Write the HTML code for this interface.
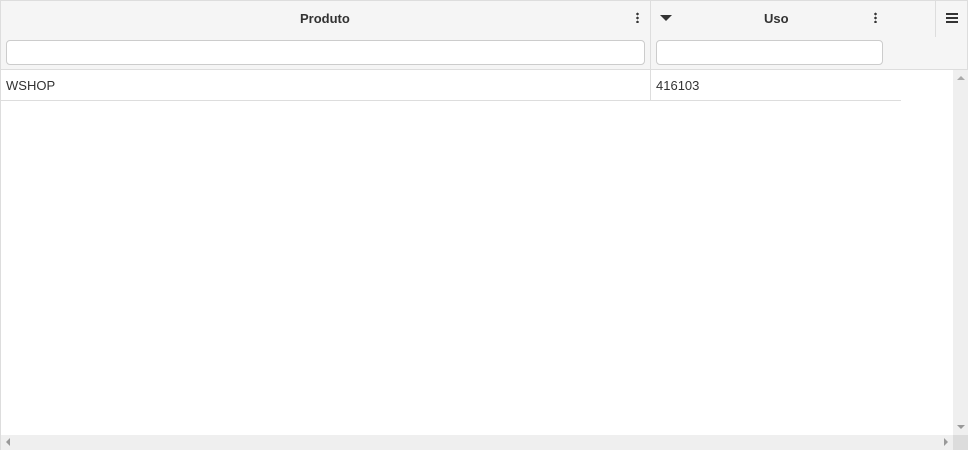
<!DOCTYPE html>
<html><head><style>
body{margin:0;width:968px;height:450px;overflow:hidden;font-family:"Liberation Sans",sans-serif;background:#fff;position:relative}
.a{position:absolute}
</style></head><body>
<div class="a" style="left:0;top:0;width:966px;height:68px;background:#f5f5f5;border:1px solid #ddd;border-bottom:1px solid #ddd"></div>
<div class="a" style="left:0;top:0;width:1px;height:450px;background:#ddd"></div>
<div class="a" style="left:650px;top:0;width:1px;height:101px;background:#ddd"></div>
<div class="a" style="left:935px;top:0;width:1px;height:37px;background:#ddd"></div>
<div class="a" style="left:300px;top:11px;font-size:13px;font-weight:bold;color:#333">Produto</div>
<div class="a" style="left:764px;top:11px;font-size:13px;font-weight:bold;color:#333">Uso</div>
<div class="a" style="left:636px;top:12px;width:3px;height:11px;background:radial-gradient(circle,#333 1.2px,transparent 1.4px) 0 0/3px 4px"></div>
<div class="a" style="left:874px;top:12px;width:3px;height:11px;background:radial-gradient(circle,#333 1.2px,transparent 1.4px) 0 0/3px 4px"></div>
<div class="a" style="left:660px;top:15px;border-left:6px solid transparent;border-right:6px solid transparent;border-top:6px solid #333"></div>
<div class="a" style="left:946px;top:13px;width:12px;height:2px;background:#333;box-shadow:0 4px 0 #333,0 8px 0 #333"></div>
<div class="a" style="left:6px;top:40px;width:637px;height:23px;background:#fff;border:1px solid #ccc;border-radius:4px"></div>
<div class="a" style="left:656px;top:40px;width:225px;height:23px;background:#fff;border:1px solid #ccc;border-radius:4px"></div>
<div class="a" style="left:1px;top:69px;width:966px;height:1px;background:#ddd"></div>
<div class="a" style="left:6px;top:78px;font-size:13px;color:#333">WSHOP</div>
<div class="a" style="left:656px;top:78px;font-size:13px;color:#333">416103</div>
<div class="a" style="left:1px;top:100px;width:900px;height:1px;background:#ddd"></div>
<div class="a" style="left:953px;top:70px;width:15px;height:365px;background:#efefef"></div>
<div class="a" style="left:1px;top:435px;width:952px;height:15px;background:#efefef"></div>
<div class="a" style="left:953px;top:435px;width:15px;height:15px;background:#dcdcdc"></div>
<div class="a" style="left:957px;top:76px;border-left:4px solid transparent;border-right:4px solid transparent;border-bottom:4px solid #aaa"></div>
<div class="a" style="left:957px;top:425px;border-left:4px solid transparent;border-right:4px solid transparent;border-top:4px solid #999"></div>
<div class="a" style="left:6px;top:438px;border-top:4px solid transparent;border-bottom:4px solid transparent;border-right:4px solid #999"></div>
<div class="a" style="left:944px;top:438px;border-top:4px solid transparent;border-bottom:4px solid transparent;border-left:4px solid #999"></div>
</body></html>
